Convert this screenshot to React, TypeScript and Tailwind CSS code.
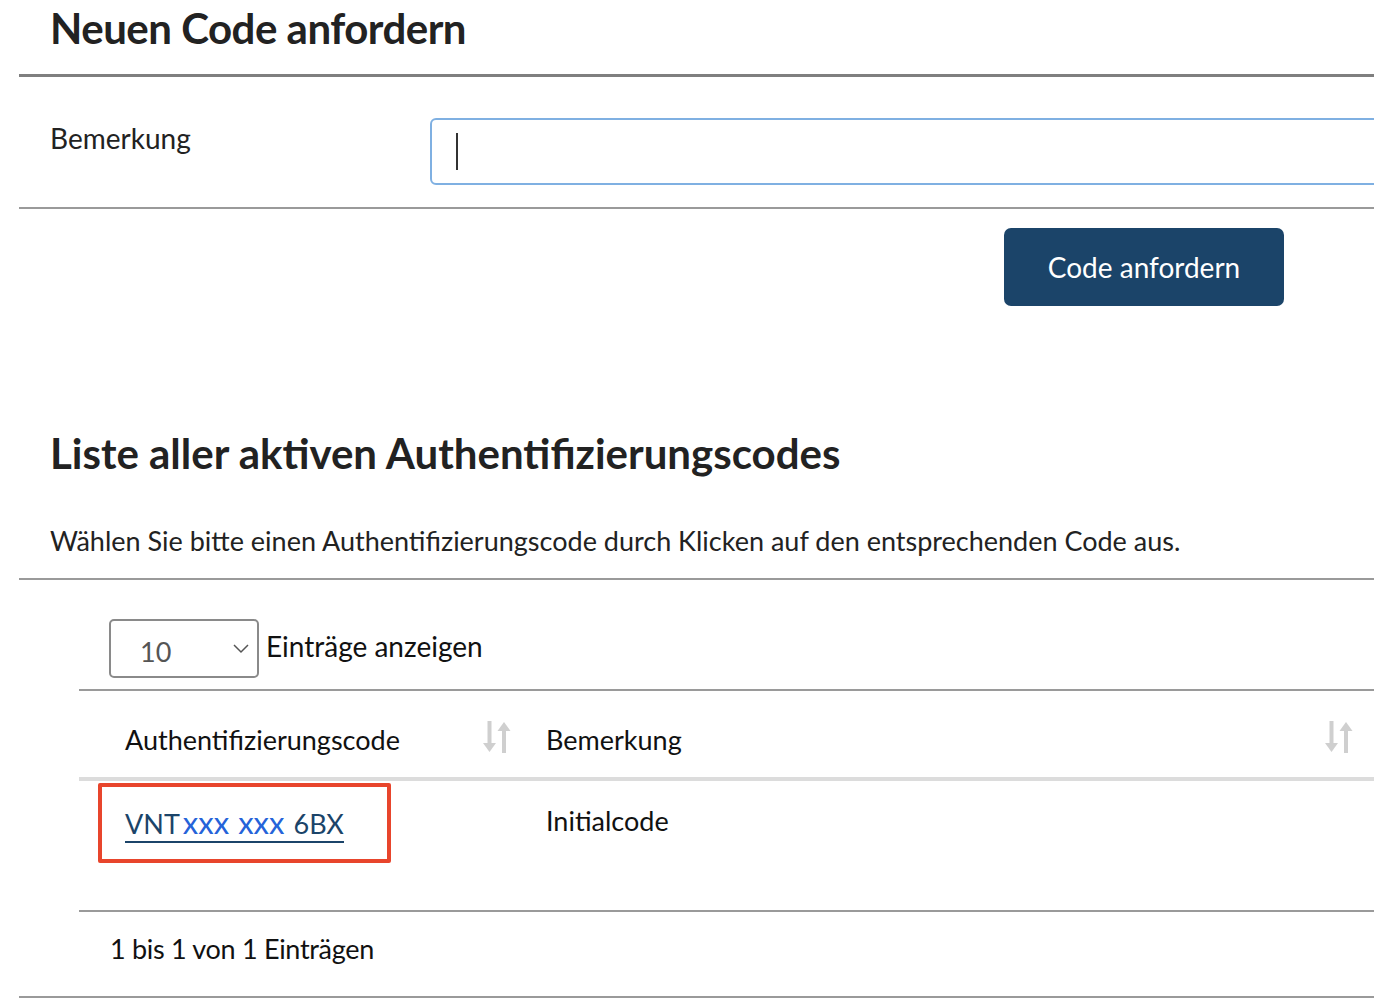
import React from "react";

const font = { fontFamily: "Lato, 'Noto Sans', sans-serif" };

function SortIcon() {
  return (
    <svg width="28" height="32" viewBox="0 0 28 32" className="shrink-0">
      <rect x="4.5" y="0" width="4" height="24" fill="#cfcfcf" />
      <polygon points="0,22 13,22 6.5,31" fill="#cfcfcf" />
      <rect x="19" y="8" width="4" height="24" fill="#cfcfcf" />
      <polygon points="14.5,10 27.5,10 21,1" fill="#cfcfcf" />
    </svg>
  );
}

export default function App() {
  return (
    <div className="w-[1374px] h-[998px] overflow-hidden bg-white text-[#222]" style={font}>
      <div className="pl-[19px]">
        {/* Title */}
        <div className="h-[74px] pl-[31px] flex items-start">
          <h1 className="text-[42px] font-bold leading-none mt-[7px] tracking-[-0.5px] text-[#222]">
            Neuen Code anfordern
          </h1>
        </div>
        <div className="h-[3px] bg-[#7f7f7f]" />
        {/* Form row */}
        <div className="h-[130px] flex pl-[31px]">
          <div className="w-[380px] shrink-0 pt-[47px] text-[28px] leading-none text-[#222]">Bemerkung</div>
          <div className="flex-1 pt-[41px] overflow-hidden">
            <div className="h-[67px] w-[1000px] border-2 border-[#7fb0e2] rounded-[6px] bg-white flex items-center pl-[24px]">
              <div className="w-[2px] h-[37px] bg-[#333]" />
            </div>
          </div>
        </div>
        <div className="h-[2px] bg-[#9a9a9a]" />
        {/* Button */}
        <div className="flex pt-[19px] pl-[985px]">
          <button className="w-[280px] h-[78px] rounded-[7px] bg-[#1b4469] text-white text-[28px] leading-none">
            Code anfordern
          </button>
        </div>
        {/* List heading */}
        <div className="pl-[31px] pt-[126px] h-[221px]">
          <h2 className="text-[42px] font-bold leading-none text-[#222]">
            Liste aller aktiven Authentifizierungscodes
          </h2>
        </div>
        <div className="pl-[31px] h-[51px]">
          <p className="text-[27px] leading-none text-[#222]">
            Wählen Sie bitte einen Authentifizierungscode durch Klicken auf den entsprechenden Code aus.
          </p>
        </div>
        <div className="h-[2px] bg-[#9a9a9a]" />
        {/* Table */}
        <div className="pl-[60px]">
          <div className="h-[109px] flex items-start pl-[30px] pt-[39px]">
            <div className="w-[150px] h-[59px] border-2 border-[#8a8a8a] rounded-[5px] flex items-center pl-[29px] pr-[8px]">
              <span className="text-[27px] leading-none text-[#555] pt-[6px]">10</span>
              <svg width="16" height="10" viewBox="0 0 16 10" className="ml-auto">
                <polyline points="1,1 8,8 15,1" fill="none" stroke="#555" strokeWidth="1.5" />
              </svg>
            </div>
            <span className="ml-[7px] mt-[13px] text-[28px] leading-none text-[#111]">Einträge anzeigen</span>
          </div>
          <div className="h-[2px] bg-[#9a9a9a]" />
          <div className="h-[86px] flex items-center pt-[10px]">
            <div className="w-[440px] pl-[46px] pr-[8px] flex items-center">
              <span className="text-[27px] leading-none text-[#111]">Authentifizierungscode</span>
              <span className="ml-auto -mt-[4px]"><SortIcon /></span>
            </div>
            <div className="flex-1 pl-[27px] pr-[21px] flex items-center">
              <span className="text-[27px] leading-none text-[#111]">Bemerkung</span>
              <span className="ml-auto -mt-[4px]"><SortIcon /></span>
            </div>
          </div>
          <div className="h-[4px] bg-[#dcdcdc]" />
          <div className="h-[129px] flex items-start">
            <div className="w-[440px] pl-[46px] pt-[26px] relative">
              <div className="absolute left-[19px] top-[2px] w-[293px] h-[80px] border-[4px] border-[#e8452c] rounded-[2px]" />
              <span className="text-[27px] leading-none text-[#1b4469] border-b-2 border-[#1b4469] pb-[3px] inline-block">
                VNT
                <span className="text-[#2563d9] text-[31px] ml-[3px]">xxx</span>
                <span className="text-[#2563d9] text-[31px] ml-[9px]">xxx</span>
                <span className="ml-[9px]">6BX</span>
              </span>
            </div>
            <div className="pl-[27px] pt-[26px] text-[27px] leading-none text-[#111]">Initialcode</div>
          </div>
          <div className="h-[2px] bg-[#9a9a9a]" />
          <div className="h-[84px] flex items-center pl-[31px] pb-[12px]">
            <span className="text-[27px] leading-none text-[#111] tracking-[-0.3px]">1 bis 1 von 1 Einträgen</span>
          </div>
        </div>
        <div className="h-[2px] bg-[#9a9a9a]" />
      </div>
    </div>
  );
}
